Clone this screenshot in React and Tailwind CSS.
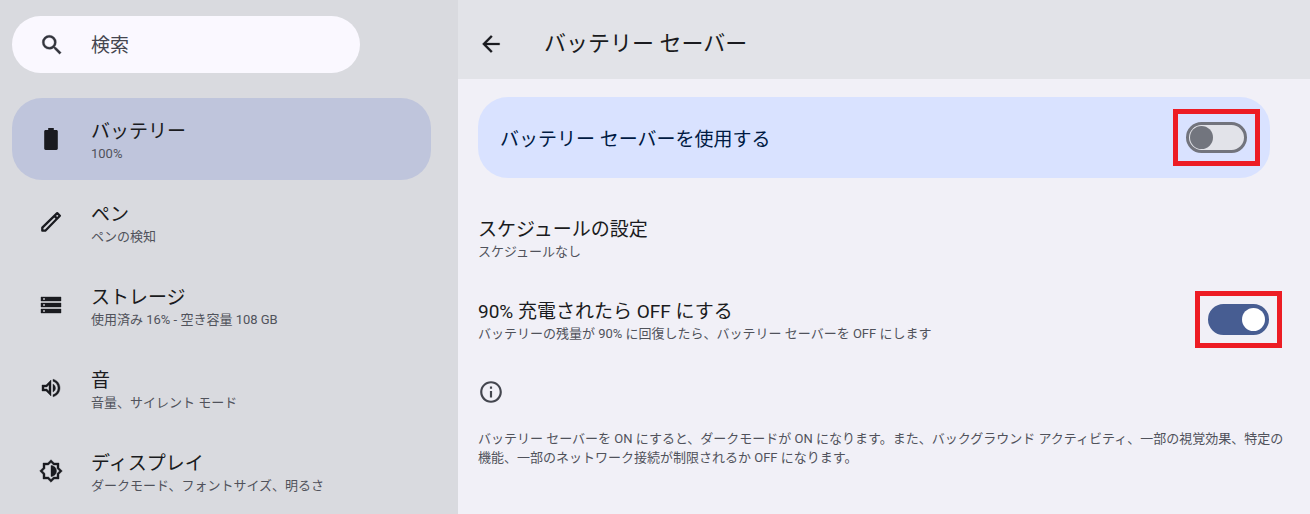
import React, { useState } from 'react'
import {
  MdArrowBack,
  MdInfoOutline,
  MdOutlineBrightness6,
  MdOutlineVolumeUp,
  MdSearch,
  MdStorage,
} from 'react-icons/md'

function BatteryIcon({ className }) {
  return (
    <svg className={className} viewBox="0 0 24 24" fill="currentColor">
      <path d="M17.4 2.9H14.8V1H9.2v1.9H6.6c-.8 0-1.4.6-1.4 1.4v17.3c0 .8.6 1.4 1.4 1.4h10.8c.8 0 1.4-.6 1.4-1.4V4.3c0-.8-.6-1.4-1.4-1.4z" />
    </svg>
  )
}

function PenIcon({ className }) {
  return (
    <svg className={className} viewBox="0 0 24 24" fill="none" stroke="currentColor" strokeWidth="2.3" strokeLinejoin="round">
      <path d="M3.3 20.7v-3.1L18.2 3.1l2.7 2.7L6.3 20.7z" />
      <path d="M15.4 5.9l2.7 2.7" />
    </svg>
  )
}

const MENU = [
  { id: 'battery', title: 'バッテリー', sub: '100%', Icon: BatteryIcon },
  { id: 'pen', title: 'ペン', sub: 'ペンの検知', Icon: PenIcon },
  { id: 'storage', title: 'ストレージ', sub: '使用済み 16% - 空き容量 108 GB', Icon: MdStorage },
  { id: 'sound', title: '音', sub: '音量、サイレント モード', Icon: MdOutlineVolumeUp },
  { id: 'display', title: 'ディスプレイ', sub: 'ダークモード、フォントサイズ、明るさ', Icon: MdOutlineBrightness6 },
]

function RowText({ title, sub }) {
  return (
    <span className="flex flex-col pt-1.5">
      <span className="text-[19px] leading-6 text-[#1a1b20]">{title}</span>
      <span className="text-[13px] leading-5 text-[#50525b]">{sub}</span>
    </span>
  )
}

// Switch inside a red highlight frame
function Switch({ id, checked, onChange }) {
  return (
    <span className="flex shrink-0 border-5 border-[#ed1c24] p-2">
      <input
        id={id}
        type="checkbox"
        role="switch"
        checked={checked}
        onChange={e => onChange(e.target.checked)}
        className="flex h-[31px] w-[61px] cursor-pointer appearance-none items-center rounded-full border-3 border-[#72747d] bg-[#e2e3e9] px-px before:size-[23px] before:rounded-full before:bg-[#72757e] before:content-[''] checked:justify-end checked:border-[#475d92] checked:bg-[#475d92] checked:before:bg-white"
      />
    </span>
  )
}

function Sidebar({ active, onSelect }) {
  return (
    <aside className="w-[458px] shrink-0 bg-[#d9dadf] pt-4 pr-[27px] pl-3">
      <label className="flex h-[57px] w-[348px] items-center gap-[26px] rounded-full bg-[#faf8ff] pl-[27px]">
        <MdSearch className="size-[26px] shrink-0 text-[#33353d] [&>[fill=none]]:stroke-none" strokeWidth="0.3" />
        <input
          type="search"
          aria-label="検索"
          placeholder="検索"
          className="w-full min-w-0 bg-transparent pt-1 pr-6 text-[19px] outline-none placeholder:text-[#44464f]"
        />
      </label>
      <nav className="mt-[25px] flex flex-col gap-px">
        {MENU.map(({ id, title, sub, Icon }) => (
          <a
            key={id}
            href={`#${id}`}
            onClick={() => onSelect(id)}
            className={`flex h-[82px] items-center gap-7 rounded-[30px] pl-[27px] ${active === id ? 'bg-[#bfc5dc]' : ''}`}>
            <Icon className="size-6 shrink-0 text-[#1a1b20] [&>[fill=none]]:stroke-none" strokeWidth="0.4" />
            <RowText title={title} sub={sub} />
          </a>
        ))}
      </nav>
    </aside>
  )
}

export default function App() {
  const [active, setActive] = useState('battery')
  const [saver, setSaver] = useState(false)
  const [autoOff, setAutoOff] = useState(true)

  return (
    <div className="flex min-h-screen overflow-hidden bg-[#f1f0f7] font-[Roboto,'Noto_Sans_CJK_JP',sans-serif]" lang="ja">
      <Sidebar active={active} onSelect={setActive} />

      <main className="min-w-0 flex-1">
        <header className="flex h-[79px] items-center gap-10 bg-[#e2e3e8] pt-2 pl-5">
          <button aria-label="戻る" className="cursor-pointer text-[#1a1b20]">
            <MdArrowBack className="size-[26px] [&>[fill=none]]:stroke-none" strokeWidth="0.2" />
          </button>
          <h1 className="text-[22px] leading-8 text-[#1a1b20]">バッテリー セーバー</h1>
        </header>

        <div className="pt-[18px] pl-5">
          <div className="mr-10 flex h-[81px] items-center justify-between rounded-[30px] bg-[#d9e2ff] pr-[10px] pl-[22px]">
            <label htmlFor="saver" className="pt-1 text-[19px] leading-6 text-[#001a43]">バッテリー セーバーを使用する</label>
            <Switch id="saver" checked={saver} onChange={setSaver} />
          </div>

          <a href="#schedule" className="mt-[18px] flex h-[82px] items-center">
            <RowText title="スケジュールの設定" sub="スケジュールなし" />
          </a>

          <div className="mr-7 flex h-[82px] items-center justify-between">
            <label htmlFor="auto-off">
              <RowText title="90% 充電されたら OFF にする" sub="バッテリーの残量が 90% に回復したら、バッテリー セーバーを OFF にします" />
            </label>
            <Switch id="auto-off" checked={autoOff} onChange={setAutoOff} />
          </div>

          <MdInfoOutline className="mt-[19px] size-[26px] text-[#44464f]" />
          <p className="mt-6 pr-4 text-[13px] leading-[19px] text-[#50525b]">
            バッテリー セーバーを ON にすると、ダークモードが ON になります。また、バックグラウンド アクティビティ、一部の視覚効果、特定の機能、一部のネットワーク接続が制限されるか OFF になります。
          </p>
        </div>
      </main>
    </div>
  )
}
